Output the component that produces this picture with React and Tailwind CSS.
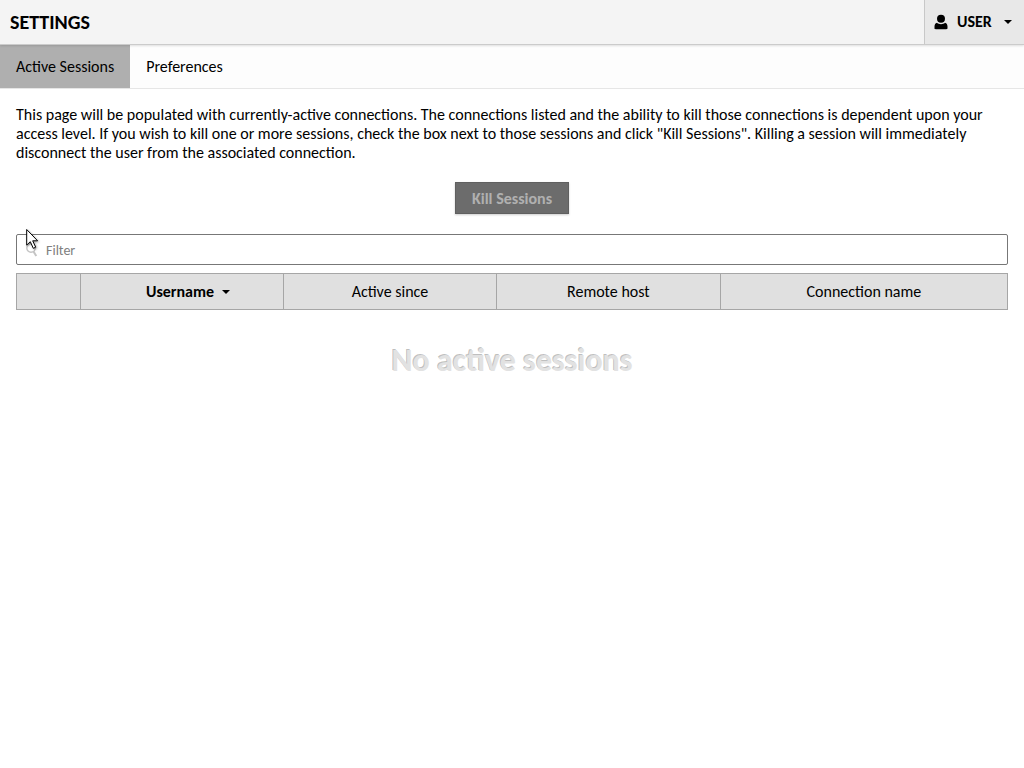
import React from "react";

function Caret() {
  return (
    <svg width="8" height="4" viewBox="0 0 8 4" aria-hidden="true" className="shrink-0">
      <path d="M0 0h8L4 4z" fill="currentColor" />
    </svg>
  );
}

function UserIcon() {
  return (
    <svg width="14" height="16" viewBox="0 0 14 16" aria-hidden="true" className="shrink-0" fill="currentColor">
      <ellipse cx="7" cy="4.7" rx="4" ry="4" />
      <path d="M3 8.800C1.300 9.300.5 10.600.5 12.500v1.500c0 .8.400 1.200 1.200 1.200h10.600c.8 0 1.200-.4 1.200-1.200v-1.500c0-1.900-.8-3.200-2.500-3.700-1.100 1-2.500 1.400-4 1.400s-2.900-.4-4-1.400z" />
    </svg>
  );
}

function SearchIcon() {
  return (
    <svg width="14" height="14" viewBox="0 0 14 14" aria-hidden="true" fill="none" stroke="#c4c4c4">
      <circle cx="5" cy="5" r="4.2" strokeWidth="1.4" />
      <path d="M7.500 8.500l2.800 4.500" strokeWidth="2" />
    </svg>
  );
}

function Pointer() {
  return (
    <svg
      width="14"
      height="22"
      viewBox="0 0 14 22"
      aria-hidden="true"
      className="pointer-events-none absolute -top-1.5 left-2.5 drop-shadow-[1px_1px_1px_rgba(0,0,0,0.35)]"
    >
      <path
        d="M.7 1.500v15.600l3.600-3.400 3 6.600 2.400-1.100-3-6.400h4.900z"
        fill="#fff"
        stroke="#000"
        strokeWidth="1"
      />
    </svg>
  );
}

const columns = [
  { label: "Active since", width: "w-[21.5%]" },
  { label: "Remote host", width: "w-[22.6%]" },
  { label: "Connection name", width: "w-[29%]" },
];

export default function App() {
  return (
    <div className="min-h-screen bg-white font-['Carlito','Lato',sans-serif] text-base leading-[19px] text-black">
      <header className="relative flex h-[45px] items-stretch justify-between border-b border-[#cbcbcb] bg-[#f4f4f4] shadow-[0_1px_2px_rgba(0,0,0,0.12)]">
        <h1 className="flex items-center px-2.5 text-xl font-bold">SETTINGS</h1>
        <button
          type="button"
          className="flex w-[100px] items-center border-l border-[#c8c8c8] bg-[#e8e8e8] pl-[9px] leading-5 font-bold"
        >
          <UserIcon />
          <span className="ml-[9px] grow text-left">USER</span>
          <span className="mr-3">
            <Caret />
          </span>
        </button>
      </header>

      <nav className="flex h-11 border-b border-[#e6e6e6] bg-[#fdfdfd]">
        <a href="#sessions" aria-current="page" className="flex items-center bg-[#afafaf] px-4">
          Active Sessions
        </a>
        <a href="#preferences" className="flex items-center px-4">
          Preferences
        </a>
      </nav>

      <main className="px-4 pt-4">
        <p>
          This page will be populated with currently-active connections. The connections listed and the ability to kill
          those connections is dependent upon your access level. If you wish to kill one or more sessions, check the box
          next to those sessions and click "Kill Sessions". Killing a session will immediately disconnect the user from
          the associated connection.
        </p>

        <div className="mt-5 flex justify-center">
          <button
            type="button"
            disabled
            className="h-8 border border-[#606060] bg-[#6c6c6c] px-4 font-bold text-[#b0b0b0] shadow-[0_1px_2px_rgba(0,0,0,0.2)]"
          >
            Kill Sessions
          </button>
        </div>

        <div className="relative mt-5">
          <span className="pointer-events-none absolute top-[9px] left-2.5">
            <SearchIcon />
          </span>
          <input
            type="text"
            aria-label="Filter"
            placeholder="Filter"
            className="block h-[31px] w-full rounded-xs border border-[#777] bg-white pt-0.5 pr-2 pl-[29px] text-sm placeholder:text-[#808080]"
          />
          <Pointer />
        </div>

        <table className="mt-2 w-full table-fixed border-collapse">
          <thead>
            <tr className="h-9 bg-[#e0e0e0]">
              <th aria-label="Select" className="w-16 border border-[#a6a6a6]" />
              <th className="w-[20.5%] border border-[#a6a6a6] font-bold" aria-sort="ascending">
                <span className="flex items-center justify-center gap-2 pl-3">
                  Username
                  <Caret />
                </span>
              </th>
              {columns.map((column) => (
                <th key={column.label} className={`${column.width} border border-[#a6a6a6] font-normal`}>
                  {column.label}
                </th>
              ))}
            </tr>
          </thead>
        </table>

        <p className="mt-8 text-center text-[32px] leading-[38px] font-bold text-[#e2e2e2] [text-shadow:-1px_-1px_0_rgba(0,0,0,0.25),1px_1px_0_#fff]">
          No active sessions
        </p>
      </main>
    </div>
  );
}
